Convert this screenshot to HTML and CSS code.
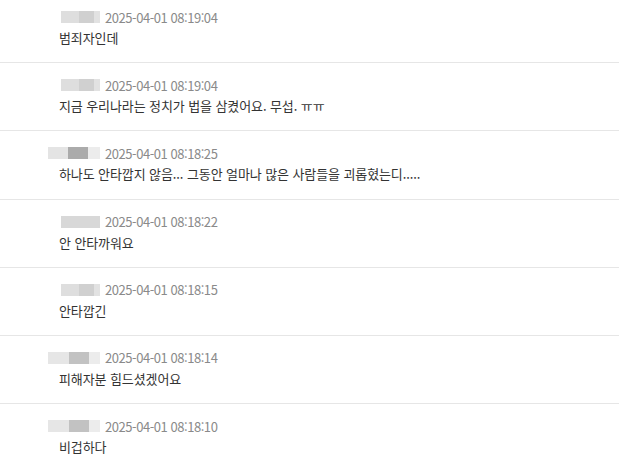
FILE: index.html
```html
<!DOCTYPE html>
<html lang="ko">
<head>
  <meta charset="UTF-8">
  <title>댓글</title>
  <link rel="stylesheet" href="styles.css">
</head>
<body>
  <ul class="comment-list">
    <li class="comment">
      <div class="meta">
        <span class="name"><span class="blur blur-light"></span></span>
        <span class="date">2025-04-01 08:19:04</span>
      </div>
      <p class="text">범죄자인데</p>
    </li>
    <li class="comment">
      <div class="meta">
        <span class="name"><span class="blur blur-light"></span></span>
        <span class="date">2025-04-01 08:19:04</span>
      </div>
      <p class="text">지금 우리나라는 정치가 법을 삼켰어요. 무섭. ㅠㅠ</p>
    </li>
    <li class="comment">
      <div class="meta">
        <span class="name"><span class="blur blur-wide blur-dark"></span></span>
        <span class="date">2025-04-01 08:18:25</span>
      </div>
      <p class="text">하나도 안타깝지 않음... 그동안 얼마나 많은 사람들을 괴롭혔는디.....</p>
    </li>
    <li class="comment">
      <div class="meta">
        <span class="name"><span class="blur blur-plain"></span></span>
        <span class="date">2025-04-01 08:18:22</span>
      </div>
      <p class="text">안 안타까워요</p>
    </li>
    <li class="comment">
      <div class="meta">
        <span class="name"><span class="blur blur-light"></span></span>
        <span class="date">2025-04-01 08:18:15</span>
      </div>
      <p class="text">안타깝긴</p>
    </li>
    <li class="comment">
      <div class="meta">
        <span class="name"><span class="blur blur-wide blur-mid"></span></span>
        <span class="date">2025-04-01 08:18:14</span>
      </div>
      <p class="text">피해자분 힘드셨겠어요</p>
    </li>
    <li class="comment">
      <div class="meta">
        <span class="name"><span class="blur blur-wider blur-mid"></span></span>
        <span class="date">2025-04-01 08:18:10</span>
      </div>
      <p class="text">비겁하다</p>
    </li>
  </ul>
</body>
</html>
```

FILE: styles.css
```css
body {
  margin: 0;
  background: #fff;
  font-family: "Noto Sans CJK KR", "Noto Sans", sans-serif;
  font-size: 13px;
  color: #333;
}
.comment-list {
  list-style: none;
  margin: -5px 0 0;
  padding: 0;
}
.comment {
  height: 67.2px;
  border-bottom: 1px solid #e6e6e6;
  box-sizing: content-box;
}
.meta {
  display: flex;
  align-items: center;
  gap: 5px;
  padding-top: 13px;
  height: 18px;
}
.name {
  display: flex;
  justify-content: flex-end;
  width: 52px;
  margin-left: 48px;
}
.blur {
  display: block;
  width: 39px;
  height: 12px;
  background: linear-gradient(90deg, #dedede 0 45%, #d0d0d0 45% 85%, #e2e2e2 85%);
}
.blur-wide {
  width: 52px;
}
.blur-wider {
  width: 53px;
}
.blur-plain {
  background: #d8d8d8;
}
.blur-dark {
  background: linear-gradient(90deg, #e4e4e4 0 38%, #ababab 38% 76%, #ececec 76%);
}
.blur-mid {
  background: linear-gradient(90deg, #e6e6e6 0 40%, #c2c2c2 40% 78%, #ececec 78%);
}
.date {
  color: #8a8a8a;
  letter-spacing: -0.45px;
}
.text {
  margin: 3px 0 0 59px;
  line-height: 18px;
  letter-spacing: -0.1px;
}
```
